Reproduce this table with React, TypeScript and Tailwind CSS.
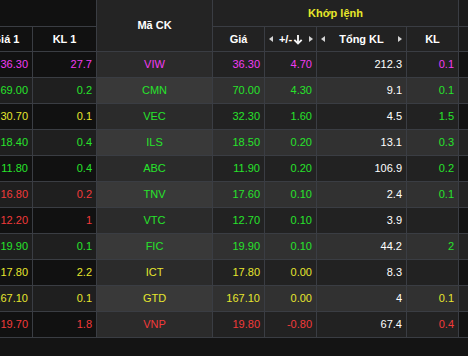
import React from "react";

type Tone = "mag" | "grn" | "yel" | "red";

const toneCls: Record<Tone, string> = {
  mag: "text-[#f23cf2]",
  grn: "text-[#27e32b]",
  yel: "text-[#e6e62e]",
  red: "text-[#f23a3a]",
};

type Row = {
  bid: string;
  bidVol: string;
  bidTone: Tone;
  sym: string;
  price: string;
  chg: string;
  total: string;
  vol: string;
  tone: Tone;
};

const rows: Row[] = [
  { bid: "36.30", bidVol: "27.7", bidTone: "mag", sym: "VIW", price: "36.30", chg: "4.70", total: "212.3", vol: "0.1", tone: "mag" },
  { bid: "69.00", bidVol: "0.2", bidTone: "grn", sym: "CMN", price: "70.00", chg: "4.30", total: "9.1", vol: "0.1", tone: "grn" },
  { bid: "30.70", bidVol: "0.1", bidTone: "yel", sym: "VEC", price: "32.30", chg: "1.60", total: "4.5", vol: "1.5", tone: "grn" },
  { bid: "18.40", bidVol: "0.4", bidTone: "grn", sym: "ILS", price: "18.50", chg: "0.20", total: "13.1", vol: "0.3", tone: "grn" },
  { bid: "11.80", bidVol: "0.4", bidTone: "grn", sym: "ABC", price: "11.90", chg: "0.20", total: "106.9", vol: "0.2", tone: "grn" },
  { bid: "16.80", bidVol: "0.2", bidTone: "red", sym: "TNV", price: "17.60", chg: "0.10", total: "2.4", vol: "0.1", tone: "grn" },
  { bid: "12.20", bidVol: "1", bidTone: "red", sym: "VTC", price: "12.70", chg: "0.10", total: "3.9", vol: "", tone: "grn" },
  { bid: "19.90", bidVol: "0.1", bidTone: "grn", sym: "FIC", price: "19.90", chg: "0.10", total: "44.2", vol: "2", tone: "grn" },
  { bid: "17.80", bidVol: "2.2", bidTone: "yel", sym: "ICT", price: "17.80", chg: "0.00", total: "8.3", vol: "", tone: "yel" },
  { bid: "167.10", bidVol: "0.1", bidTone: "yel", sym: "GTD", price: "167.10", chg: "0.00", total: "4", vol: "0.1", tone: "yel" },
  { bid: "19.70", bidVol: "1.8", bidTone: "red", sym: "VNP", price: "19.80", chg: "-0.80", total: "67.4", vol: "0.4", tone: "red" },
];

const Tri = ({ dir }: { dir: "l" | "r" }) => (
  <svg width="4" height="6" viewBox="0 0 4 6" className="shrink-0">
    <path d={dir === "l" ? "M4 0L0 3L4 6Z" : "M0 0L4 3L0 6Z"} fill="#d4d4d4" />
  </svg>
);

const DownArrow = () => (
  <svg width="10" height="11" viewBox="0 0 10 11" className="shrink-0">
    <path d="M5 1V9.5M1.3 5.8L5 9.5L8.7 5.8" stroke="#f4f4f4" strokeWidth="1.9" fill="none" />
  </svg>
);

export default function App() {
  const cell = "border-r border-b border-[#3a3d43] flex items-center";
  return (
    <div
      className="w-[468px] h-[356px] overflow-hidden bg-[#141414] text-[11px]"
      style={{ fontFamily: '"Liberation Sans", Arial, sans-serif' }}
    >
      <div className="ml-[-20px] grid grid-cols-[53px_64px_116px_52px_52px_90px_52px_60px] grid-rows-[27px_25px]">
        {/* header */}
        <div className={`${cell} col-span-2 bg-[#111111]`} />
        <div className={`${cell} row-span-2 justify-center bg-[#242424] font-bold text-white`}>Mã CK</div>
        <div className={`${cell} col-span-4 justify-center bg-[#222222] font-bold text-[#e8e82a]`}>Khớp lệnh</div>
        <div className={`${cell} bg-[#1b1b1b]`} />

        <div className={`${cell} justify-center bg-[#111111] font-bold text-white`}>Giá 1</div>
        <div className={`${cell} justify-center bg-[#111111] font-bold text-white`}>KL 1</div>
        <div className={`${cell} justify-center bg-[#222222] font-bold text-white`}>Giá</div>
        <div className={`${cell} justify-between pl-[4px] pr-[3px] bg-[#222222] font-bold text-white`}>
          <Tri dir="l" />
          <span className="flex items-center gap-[1px]">
            +/-
            <DownArrow />
          </span>
          <Tri dir="r" />
        </div>
        <div className={`${cell} justify-between px-[4px] bg-[#222222] font-bold text-white`}>
          <Tri dir="l" />
          <span>Tổng KL</span>
          <Tri dir="r" />
        </div>
        <div className={`${cell} justify-center bg-[#222222] font-bold text-white`}>KL</div>
        <div className={`${cell} bg-[#1b1b1b]`} />

        {/* rows */}
        {rows.map((r, i) => {
          const odd = i % 2 === 0;
          const left = odd ? "bg-[#111111]" : "bg-[#1f1f1f]";
          const mid = odd ? "bg-[#2b2b2b]" : "bg-[#393939]";
          const right = odd ? "bg-[#222222]" : "bg-[#313131]";
          const last = odd ? "bg-[#121212]" : "bg-[#232323]";
          const num = `${cell} h-[26px] justify-end pr-[4px] whitespace-nowrap`;
          return (
            <React.Fragment key={r.sym}>
              <div className={`${num} ${left} ${toneCls[r.bidTone]}`}>{r.bid}</div>
              <div className={`${num} ${left} ${toneCls[r.bidTone]}`}>{r.bidVol}</div>
              <div className={`${cell} h-[26px] justify-center ${mid} ${toneCls[r.tone]}`}>{r.sym}</div>
              <div className={`${num} ${right} ${toneCls[r.tone]}`}>{r.price}</div>
              <div className={`${num} ${right} ${toneCls[r.tone]}`}>{r.chg}</div>
              <div className={`${num} ${right} text-white`}>{r.total}</div>
              <div className={`${num} ${right} ${toneCls[r.tone]}`}>{r.vol}</div>
              <div className={`${cell} h-[26px] ${last}`} />
            </React.Fragment>
          );
        })}
      </div>
    </div>
  );
}
